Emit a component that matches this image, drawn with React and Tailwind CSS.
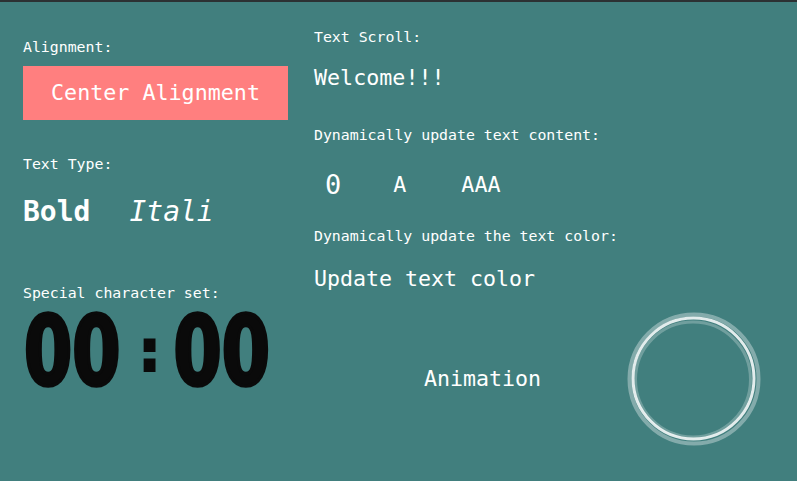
import React from "react";

const mono = "font-['DejaVu_Sans_Mono',monospace]";

export default function App() {
  return (
    <div className={`w-[797px] h-[481px] overflow-hidden bg-[#417f7e] border-t-2 border-[#2c3133] text-white ${mono}`}>
      <div className="flex px-[23px]">
        {/* left column */}
        <div className="w-[265px] flex flex-col">
          <div className="mt-[35px] h-[20px] leading-[20px] text-[14.85px]">Alignment:</div>
          <div className="mt-[9px] h-[54px] bg-[#ff7f7f] flex items-center justify-center text-[21.7px]">
            Center Alignment
          </div>
          <div className="mt-[34px] h-[20px] leading-[20px] text-[14.85px]">Text Type:</div>
          <div className="mt-[20px] h-[36px] leading-[36px] text-[28px] flex">
            <span className="font-bold">Bold</span>
            <span className="italic ml-[39px]">Itali</span>
          </div>
          <div className="mt-[53px] h-[20px] leading-[20px] text-[14.85px]">Special character set:</div>
          <div className="mt-[18px] h-[64px] flex items-center text-[#0a0a0a] font-['DejaVu_Sans_Condensed','DejaVu_Sans',sans-serif] font-bold [-webkit-text-stroke:3px_#0a0a0a]">
            <span className="inline-block ml-[1px] text-[77px] leading-[64px] scale-y-[1.24]">00</span>
            <span className="inline-block text-[56px] leading-[64px] ml-[19px] mr-[14px] -translate-y-[2px]">:</span>
            <span className="inline-block text-[77px] leading-[64px] scale-y-[1.24]">00</span>
          </div>
        </div>

        {/* right column */}
        <div className="ml-[26px] flex-1 flex flex-col">
          <div className="mt-[25px] h-[20px] leading-[20px] text-[14.85px]">Text Scroll:</div>
          <div className="mt-[16px] h-[30px] leading-[30px] text-[21.7px]">Welcome!!!</div>
          <div className="mt-[32px] h-[20px] leading-[20px] text-[14.85px]">Dynamically update text content:</div>
          <div className="mt-[25px] h-[30px] flex items-end leading-[30px]">
            <span className="ml-[11px] text-[27px]">0</span>
            <span className="ml-[52px] text-[21.7px]">A</span>
            <span className="ml-[55px] text-[21.7px]">AAA</span>
          </div>
          <div className="mt-[26px] h-[20px] leading-[20px] text-[14.85px]">Dynamically update the text color:</div>
          <div className="mt-[18px] h-[30px] leading-[30px] text-[21.6px]">Update text color</div>
          <div className="mt-[18px] flex items-center">
            <span className="ml-[110px] text-[21.6px] leading-[30px]">Animation</span>
            <svg className="ml-[86px]" width="134" height="134" viewBox="0 0 134 134">
              <circle cx="67" cy="67" r="64.5" fill="none" stroke="rgba(255,255,255,0.35)" strokeWidth="4" />
              <circle cx="66.5" cy="66.5" r="60.5" fill="none" stroke="rgba(255,255,255,0.85)" strokeWidth="3" />
              <circle cx="66" cy="67.5" r="57.5" fill="none" stroke="rgba(255,255,255,0.25)" strokeWidth="3" />
            </svg>
          </div>
        </div>
      </div>
    </div>
  );
}
